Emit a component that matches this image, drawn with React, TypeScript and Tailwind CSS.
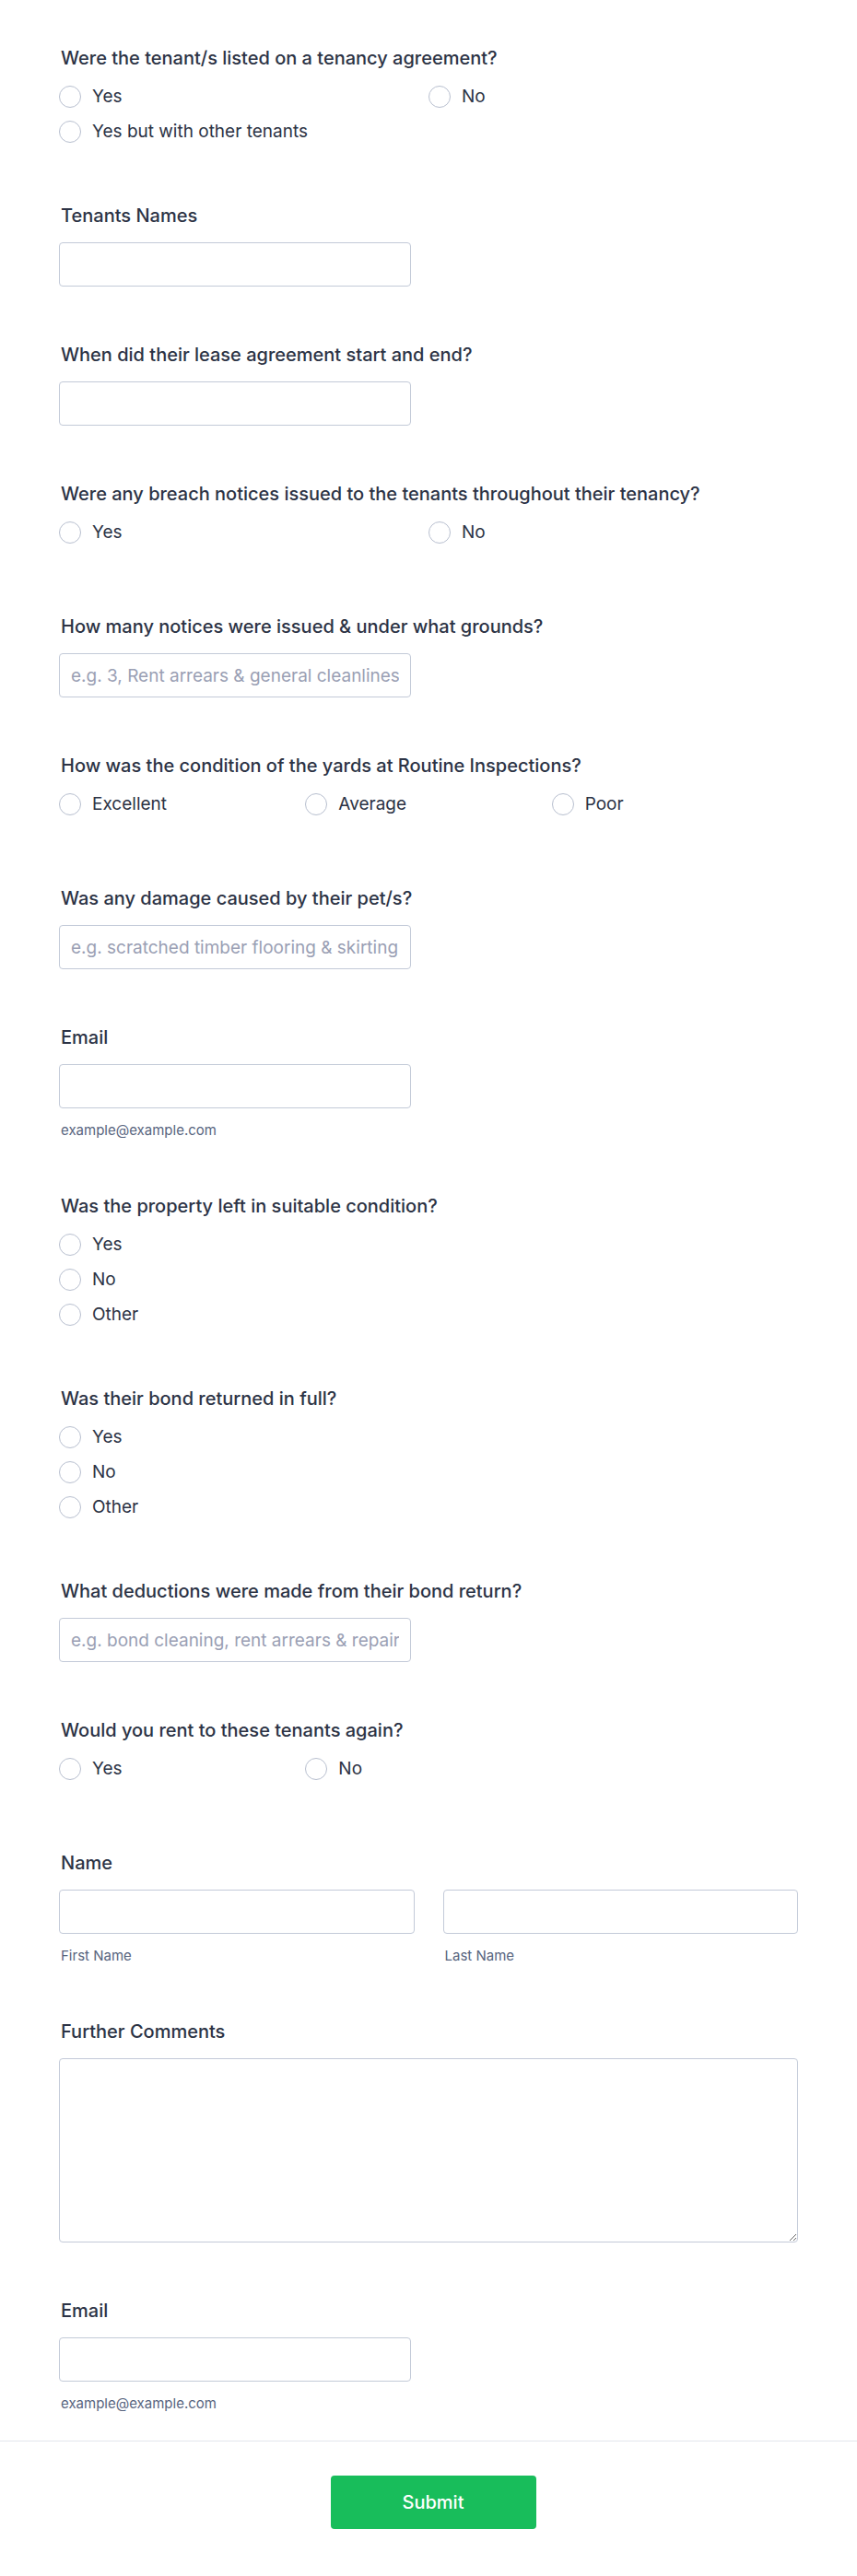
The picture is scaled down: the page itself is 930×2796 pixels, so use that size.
const font = { fontFamily: "Inter, 'Noto Sans', sans-serif" };

type Field =
  | { kind: "radio"; label: string; options: string[]; cols: 1 | 2 | 3 }
  | { kind: "input"; label: string; placeholder?: string }
  | { kind: "email"; label: string }
  | { kind: "name"; label: string }
  | { kind: "textarea"; label: string };

const fields: Field[] = [
  { kind: "radio", label: "Were the tenant/s listed on a tenancy agreement?", options: ["Yes", "No", "Yes but with other tenants"], cols: 2 },
  { kind: "input", label: "Tenants Names" },
  { kind: "input", label: "When did their lease agreement start and end?" },
  { kind: "radio", label: "Were any breach notices issued to the tenants throughout their tenancy?", options: ["Yes", "No"], cols: 2 },
  { kind: "input", label: "How many notices were issued & under what grounds?", placeholder: "e.g. 3, Rent arrears & general cleanliness" },
  { kind: "radio", label: "How was the condition of the yards at Routine Inspections?", options: ["Excellent", "Average", "Poor"], cols: 3 },
  { kind: "input", label: "Was any damage caused by their pet/s?", placeholder: "e.g. scratched timber flooring & skirting boards" },
  { kind: "email", label: "Email" },
  { kind: "radio", label: "Was the property left in suitable condition?", options: ["Yes", "No", "Other"], cols: 1 },
  { kind: "radio", label: "Was their bond returned in full?", options: ["Yes", "No", "Other"], cols: 1 },
  { kind: "input", label: "What deductions were made from their bond return?", placeholder: "e.g. bond cleaning, rent arrears & repairs" },
  { kind: "radio", label: "Would you rent to these tenants again?", options: ["Yes", "No"], cols: 3 },
  { kind: "name", label: "Name" },
  { kind: "textarea", label: "Further Comments" },
  { kind: "email", label: "Email" },
];

const inputCls =
  "h-12 rounded-[4px] border border-[#c3cad8] bg-white px-3 text-[19px] text-[#2c3345] outline-none placeholder:text-[#9aa0b4]";

function Radio({ label }: { label: string }) {
  return (
    <label className="flex h-6 items-center gap-3 text-[19px] text-[#2c3345]">
      <input type="radio" className="h-6 w-6 shrink-0 appearance-none rounded-full border border-[#b8bfcf] bg-white" />
      <span>{label}</span>
    </label>
  );
}

function Sub({ children }: { children: string }) {
  return <p className="mt-[15px] pl-[2px] text-[15px] leading-[18px] text-[#57647e]">{children}</p>;
}

function fieldPad(f: Field) {
  if (f.kind === "radio") return f.options.length > f.cols ? "pb-[66px]" : "pb-[77px]";
  if (f.kind === "email" || f.kind === "name") return "pb-[60px]";
  return "pb-[61px]";
}

function FieldBody({ f }: { f: Field }) {
  if (f.kind === "radio") {
    const grid = f.cols === 1 ? "grid-cols-1" : f.cols === 2 ? "grid-cols-2" : "grid-cols-3";
    return (
      <div className={`grid ${grid} gap-y-[14px] pt-px`}>
        {f.options.map((o) => (
          <Radio key={o} label={o} />
        ))}
      </div>
    );
  }
  if (f.kind === "input") {
    return <input className={`${inputCls} w-[382px]`} placeholder={f.placeholder} />;
  }
  if (f.kind === "email") {
    return (
      <div>
        <input type="email" className={`${inputCls} w-[382px]`} />
        <Sub>example@example.com</Sub>
      </div>
    );
  }
  if (f.kind === "name") {
    return (
      <div className="grid grid-cols-2 gap-x-[31px]">
        <div>
          <input className={`${inputCls} w-full`} />
          <Sub>First Name</Sub>
        </div>
        <div>
          <input className={`${inputCls} w-full`} />
          <Sub>Last Name</Sub>
        </div>
      </div>
    );
  }
  return <textarea className="block h-[200px] w-full rounded-[4px] border border-[#c3cad8] bg-white p-3 text-[19px] outline-none" />;
}

export default function App() {
  return (
    <div className="min-h-screen bg-white" style={font}>
      <form className="px-16 pt-[50px]">
        {fields.map((f, i) => (
          <div key={i} className={i === fields.length - 1 ? "pb-[31px]" : fieldPad(f)}>
            <h3 className="mb-4 pl-[2px] text-[20px] font-medium leading-[26px] text-[#2c3345]">{f.label}</h3>
            <FieldBody f={f} />
          </div>
        ))}
      </form>
      <div className="border-t border-[#e3e6ec] pb-[50px] pt-[37px]">
        <div className="flex justify-center pl-[10px]">
          <button type="button" className="h-[58px] w-[223px] rounded-[4px] bg-[#18bd5b] text-[20px] font-medium text-white">
            Submit
          </button>
        </div>
      </div>
    </div>
  );
}
